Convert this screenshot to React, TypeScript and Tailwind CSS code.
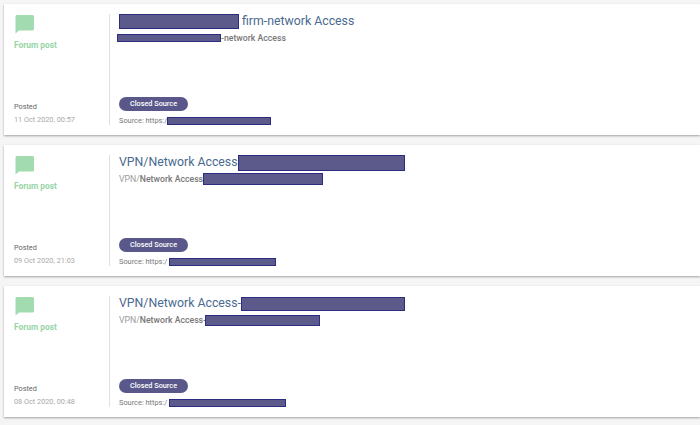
import React from "react";

const Box = ({ w, h, cls = "" }: { w: number; h: number; cls?: string }) => (
  <span
    className={`inline-block shrink-0 bg-[#5c5a8b] border border-[#2e2c80] ${cls}`}
    style={{ width: w, height: h }}
  />
);

type CardData = {
  date: string;
  title: React.ReactNode;
  sub: React.ReactNode;
  sourceW: number;
  sourceGap: string;
};

const Card = ({ date, title, sub, sourceW, sourceGap }: CardData) => (
  <div className="flex h-[131px] bg-white pt-[10px] pb-[10px] shadow-[0_1px_2px_rgba(0,0,0,0.35)]">
    <div className="flex w-[106px] shrink-0 flex-col justify-between border-r border-[#e0e0e0] pl-[10px]">
      <div>
        <svg width="22" height="20" viewBox="0 0 22 20">
          <path d="M2.5 1H18.5A1.5 1.5 0 0 1 20 2.5V15A1.5 1.5 0 0 1 18.5 16.5H5L1.5 19.5V2.5A1.5 1.5 0 0 1 2.5 1Z" fill="#a3dbb0" />
        </svg>
        <div className="mt-[5px] text-[8.4px] font-bold leading-[12px] text-[#97d6a6]">Forum post</div>
      </div>
      <div className="-mb-[1px]">
        <div className="text-[7.3px] leading-[12px] text-[#666]">Posted</div>
        <div className="mt-[1px] text-[7.3px] leading-[12px] text-[#a8a8a8]">{date}</div>
      </div>
    </div>
    <div className="flex min-w-0 flex-1 flex-col justify-between pl-[9px]">
      <div>
        <div className="flex h-[15px] items-center text-[12.3px] leading-[15px] text-[#4a6a8f]">{title}</div>
        <div className="mt-[3px] flex h-[12px] items-center text-[8.7px] leading-[12px] text-[#9a9a9a]">{sub}</div>
      </div>
      <div className="-mb-[1px]">
        <div className="flex h-[14px] w-[69px] items-center justify-center rounded-full bg-[#5a588a] text-[7.3px] font-medium text-white">
          Closed Source
        </div>
        <div className="mt-[5px] flex h-[10px] items-center text-[7.4px] leading-[10px] text-[#777]">
          <span>Source: https:/</span>
          <Box w={sourceW} h={8} cls={sourceGap} />
        </div>
      </div>
    </div>
  </div>
);

export default function App() {
  return (
    <div
      className="flex h-[425px] w-[700px] flex-col gap-[10px] overflow-hidden bg-[#f5f5f5] pl-[4px] pt-[4px]"
      style={{ fontFamily: "Roboto, sans-serif" }}
    >
      <Card
        date="11 Oct 2020, 00:57"
        title={
          <>
            <Box w={120} h={15} />
            <span className="ml-[3px]">firm-network Access</span>
          </>
        }
        sub={
          <>
            <Box w={104} h={8} cls="-ml-[2px]" />
            <span className="font-medium text-[#777]">-network Access</span>
          </>
        }
        sourceW={104}
        sourceGap=""
      />
      <Card
        date="09 Oct 2020, 21:03"
        title={
          <>
            <span>VPN/Network Access</span>
            <Box w={167} h={16} />
          </>
        }
        sub={
          <>
            <span>VPN/</span>
            <span className="font-medium text-[#777]">Network Access</span>
            <Box w={120} h={12} />
          </>
        }
        sourceW={107}
        sourceGap="ml-[2px]"
      />
      <Card
        date="08 Oct 2020, 00:48"
        title={
          <>
            <span>VPN/Network Access-</span>
            <Box w={164} h={14} />
          </>
        }
        sub={
          <>
            <span>VPN/</span>
            <span className="font-medium text-[#777]">Network Access-</span>
            <Box w={115} h={11} cls="-ml-[1px]" />
          </>
        }
        sourceW={117}
        sourceGap="ml-[2px]"
      />
    </div>
  );
}
